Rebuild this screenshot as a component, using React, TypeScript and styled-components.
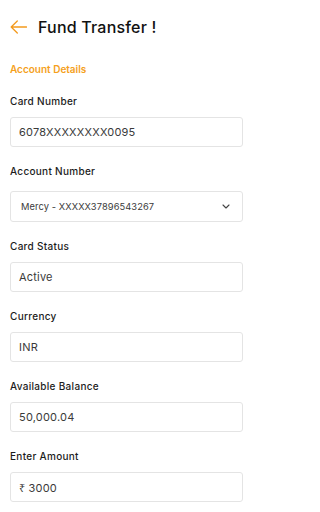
import React from "react";
import styled, { createGlobalStyle } from "styled-components";

const Global = createGlobalStyle`
  html, body { margin: 0; padding: 0; background: #ffffff; }
  body { font-family: Inter, "Noto Sans", "DejaVu Sans", sans-serif; -webkit-font-smoothing: antialiased; }
  * { box-sizing: border-box; }
`;

const Page = styled.div`
  width: 256px;
  padding: 12px 13px 0 10px;
  display: flex;
  flex-direction: column;
`;

const Header = styled.div`
  height: 30px;
  display: flex;
  align-items: center;
  gap: 11px;
`;

const BackButton = styled.button`
  border: 0;
  background: none;
  padding: 0;
  width: 17px;
  height: 14px;
  display: flex;
  align-items: center;
  cursor: pointer;
`;

const Title = styled.h1`
  margin: 0;
  font-size: 16px;
  font-weight: 500;
  color: #111111;
  letter-spacing: 0.2px;
`;

const Section = styled.div`
  margin-top: 20px;
  font-size: 10px;
  line-height: 14px;
  font-weight: 600;
  color: #f5a11c;
`;

const Form = styled.div`
  margin-top: 18px;
  display: flex;
  flex-direction: column;
  gap: 17px;
`;

const Field = styled.div`
  display: flex;
  flex-direction: column;
`;

const Label = styled.label<{ $gap?: number }>`
  font-size: 10px;
  line-height: 14px;
  font-weight: 500;
  color: #1c1c1c;
  letter-spacing: 0.3px;
  margin-bottom: ${(p) => p.$gap ?? 9}px;
`;

const Box = styled.div<{ $small?: boolean }>`
  height: ${(p) => (p.$small ? 31 : 30)}px;
  border: 1px solid #e4e4e4;
  border-radius: 3px;
  display: flex;
  align-items: center;
  justify-content: space-between;
  padding: 0 ${(p) => (p.$small ? 12 : 8)}px 0 ${(p) => (p.$small ? 10 : 8)}px;
  font-size: ${(p) => (p.$small ? 9.3 : 11)}px;
  color: #3a3a3a;
  letter-spacing: ${(p) => (p.$small ? 0.1 : 0.2)}px;
`;

const Rupee = styled.span`
  font-family: "Noto Sans", "DejaVu Sans", sans-serif;
  margin-right: 3px;
`;

const fields: { label: string; value: React.ReactNode; select?: boolean }[] = [
  { label: "Card Number", value: "6078XXXXXXXX0095" },
  { label: "Account Number", value: "Mercy - XXXXX37896543267", select: true },
  { label: "Card Status", value: "Active" },
  { label: "Currency", value: "INR" },
  { label: "Available Balance", value: "50,000.04" },
  {
    label: "Enter Amount",
    value: (
      <span>
        <Rupee>₹</Rupee>3000
      </span>
    ),
  },
];

export default function App() {
  return (
    <>
      <Global />
      <Page>
        <Header>
          <BackButton aria-label="Back">
            <svg width="17" height="14" viewBox="0 0 17 14" fill="none">
              <path d="M16.5 7H1.2M7.3 1L1.2 7L7.3 13" stroke="#f39a1e" strokeWidth="1.3" strokeLinecap="round" strokeLinejoin="round" />
            </svg>
          </BackButton>
          <Title>Fund Transfer !</Title>
        </Header>
        <Section>Account Details</Section>
        <Form>
          {fields.map((f) => (
            <Field key={f.label}>
              <Label $gap={f.select ? 13 : 9}>{f.label}</Label>
              <Box $small={f.select}>
                {f.value}
                {f.select && (
                  <svg width="8" height="5" viewBox="0 0 8 5" fill="none">
                    <path d="M1 1l3 3 3-3" stroke="#444" strokeWidth="1.1" strokeLinecap="round" strokeLinejoin="round" />
                  </svg>
                )}
              </Box>
            </Field>
          ))}
        </Form>
      </Page>
    </>
  );
}
